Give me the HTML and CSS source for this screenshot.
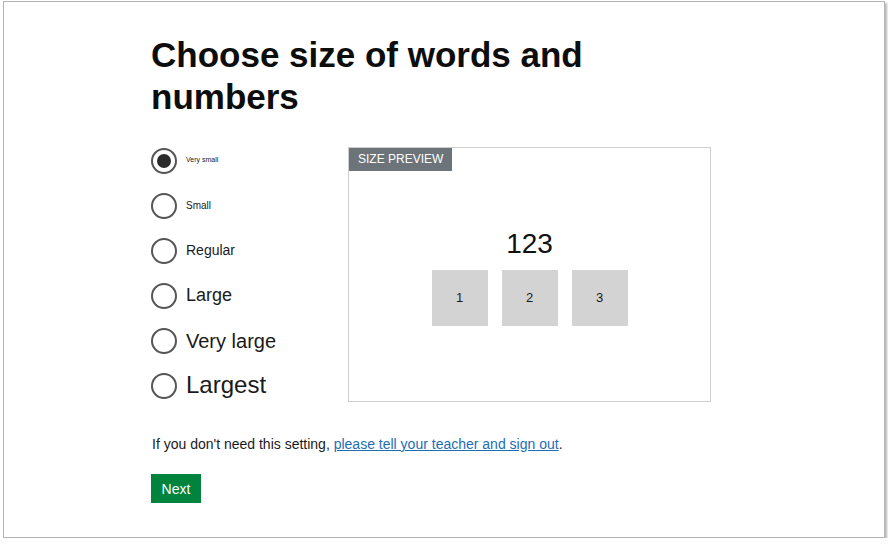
FILE: index.html
```html
<!DOCTYPE html>
<html lang="en">
<head>
<meta charset="utf-8">
<title>Choose size of words and numbers</title>
<link rel="stylesheet" href="styles.css">
</head>
<body>
<div class="frame">
  <main class="content">
    <h1 class="title">Choose size of words and numbers</h1>
    <div class="settings">
      <div class="options">
        <label class="option"><span class="radio radio-checked"></span><span class="opt-text size-xs">Very small</span></label>
        <label class="option"><span class="radio"></span><span class="opt-text size-s">Small</span></label>
        <label class="option"><span class="radio"></span><span class="opt-text size-m">Regular</span></label>
        <label class="option"><span class="radio"></span><span class="opt-text size-l">Large</span></label>
        <label class="option"><span class="radio"></span><span class="opt-text size-xl">Very large</span></label>
        <label class="option"><span class="radio"></span><span class="opt-text size-xxl">Largest</span></label>
      </div>
      <section class="preview">
        <div class="preview-tag">SIZE PREVIEW</div>
        <div class="preview-number">123</div>
        <div class="preview-keys">
          <div class="key">1</div>
          <div class="key">2</div>
          <div class="key">3</div>
        </div>
      </section>
    </div>
    <p class="note">If you don't need this setting, <a class="note-link" href="#">please tell your teacher and sign out</a>.</p>
    <button class="next-btn" type="button">Next</button>
  </main>
</div>
</body>
</html>
```

FILE: styles.css
```css
html, body {
  margin: 0;
  padding: 0;
  background: #ffffff;
}

body {
  font-family: "Liberation Sans", Arial, sans-serif;
  color: #1a1a1a;
}

.frame {
  box-sizing: border-box;
  margin: 1px 0 0 3px;
  width: 882px;
  height: 537px;
  border: 1px solid #b4b4b4;
  box-shadow: 2px 2px 2px rgba(0, 0, 0, 0.28);
  background: #ffffff;
}

.content {
  padding: 32px 0 0 147px;
}

.title {
  margin: 0;
  width: 460px;
  font-size: 35px;
  line-height: 42px;
  font-weight: bold;
  color: #0d0d0d;
}

.settings {
  display: flex;
  align-items: flex-start;
  margin-top: 20px;
}

.options {
  display: flex;
  flex-direction: column;
  width: 197px;
}

.option {
  display: flex;
  align-items: center;
  height: 45px;
}

.radio {
  box-sizing: border-box;
  flex: none;
  width: 26px;
  height: 26px;
  border: 2px solid #555555;
  border-radius: 50%;
  background: #ffffff;
  display: flex;
  align-items: center;
  justify-content: center;
}

.radio-checked::after {
  content: "";
  width: 14px;
  height: 14px;
  border-radius: 50%;
  background: #2b2b2b;
}

.opt-text {
  margin-left: 9px;
  color: #1a1a1a;
  line-height: 1.2;
}

.size-xs { font-size: 7px; }
.size-s { font-size: 10px; }
.size-m { font-size: 14px; }
.size-l { font-size: 18px; }
.size-xl { font-size: 20px; }
.size-xxl { font-size: 24px; }

.preview {
  position: relative;
  box-sizing: border-box;
  margin-top: 9px;
  width: 363px;
  height: 255px;
  border: 1px solid #cfcfcf;
  display: flex;
  flex-direction: column;
  align-items: center;
  justify-content: center;
  padding-top: 3px;
}

.preview-tag {
  position: absolute;
  top: 0;
  left: 0;
  height: 23px;
  padding: 0 9px;
  background: #6c7479;
  color: #ffffff;
  font-size: 12px;
  line-height: 23px;
}

.preview-number {
  font-size: 28px;
  line-height: 34px;
  color: #111111;
}

.preview-keys {
  display: flex;
  gap: 14px;
  margin-top: 9px;
}

.key {
  width: 56px;
  height: 56px;
  background: #d3d3d3;
  display: flex;
  align-items: center;
  justify-content: center;
  font-size: 13px;
  color: #1a1a1a;
}

.note {
  margin: 27px 0 0 1px;
  font-size: 14px;
  line-height: 18px;
  color: #1a1a1a;
}

.note-link {
  color: #1d6db5;
  text-decoration: underline;
}

.next-btn {
  margin-top: 21px;
  height: 29px;
  width: 50px;
  padding: 0;
  border: none;
  background: #00843d;
  color: #ffffff;
  font-family: "Liberation Sans", Arial, sans-serif;
  font-size: 14px;
  cursor: pointer;
}
```
